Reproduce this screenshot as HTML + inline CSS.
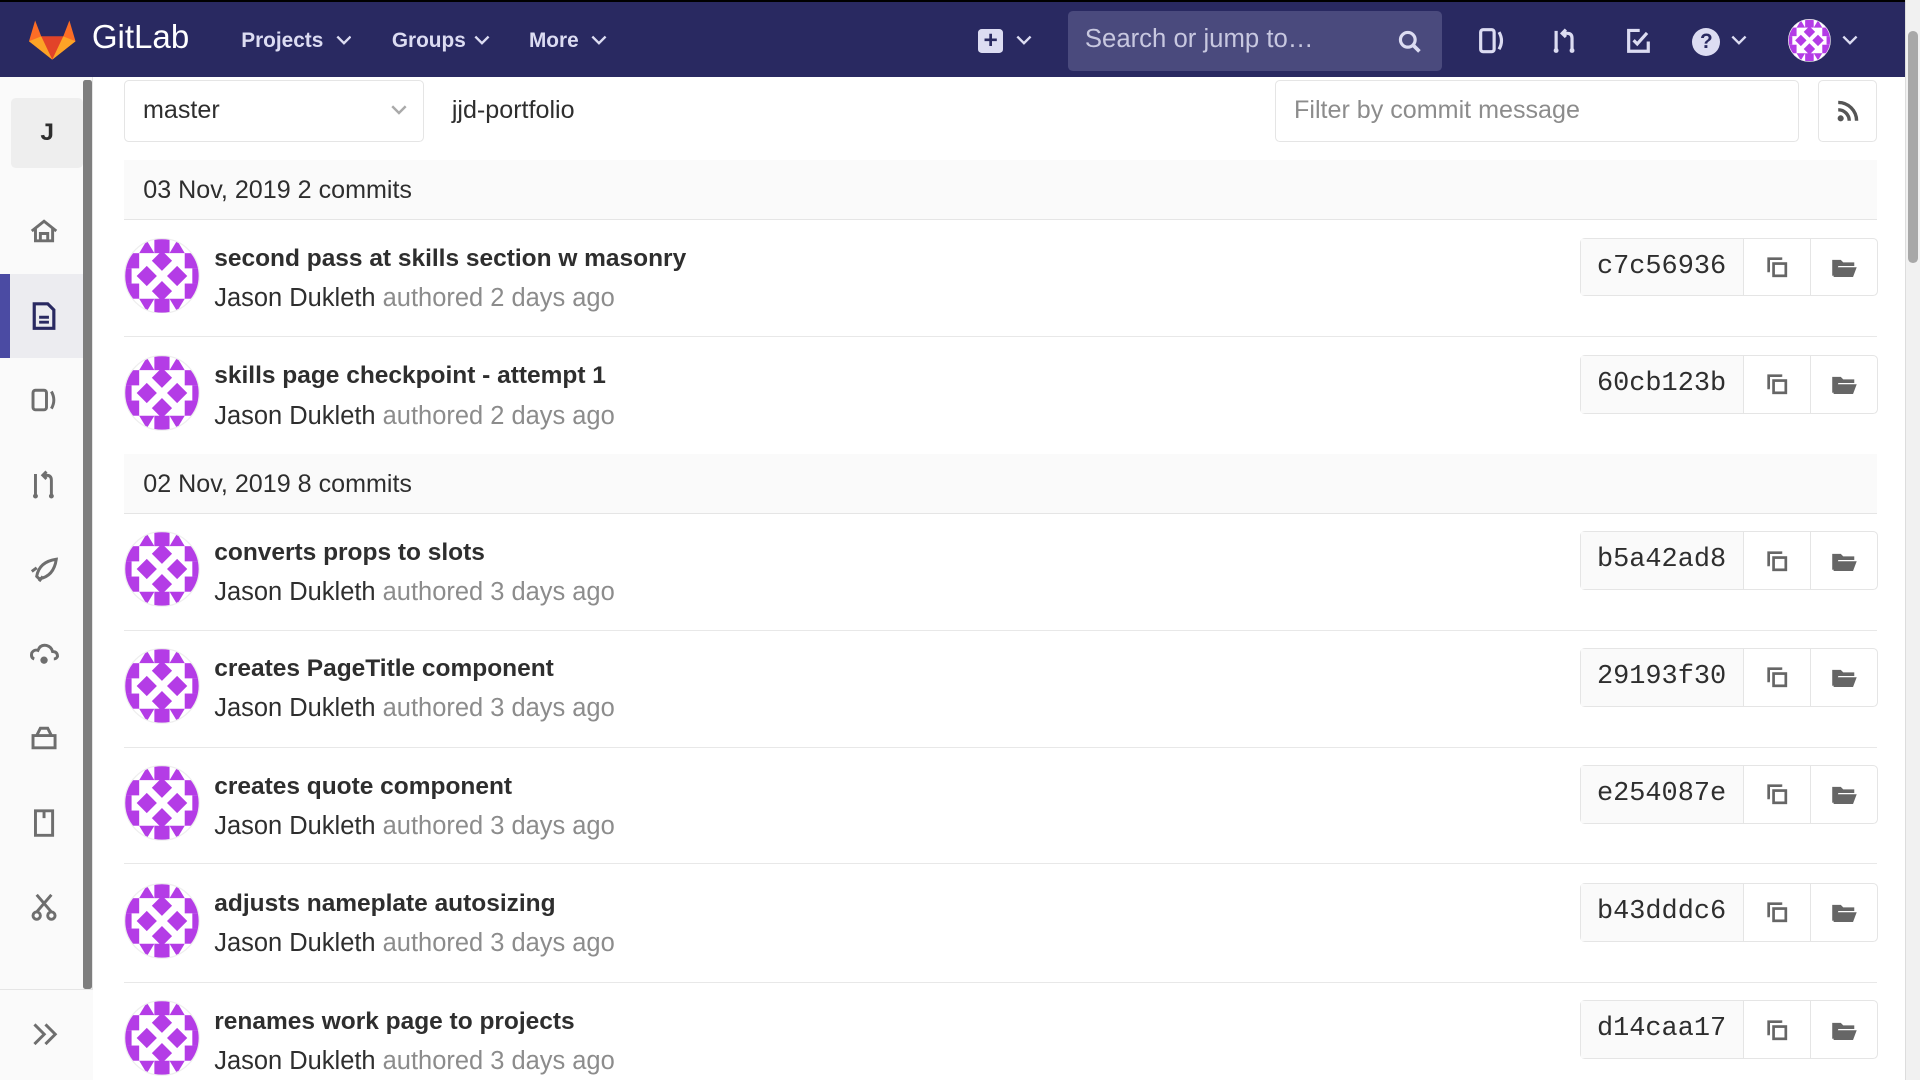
<!DOCTYPE html>
<html><head><meta charset="utf-8"><style>
*{box-sizing:border-box;margin:0;padding:0}
html,body{width:1920px;height:1080px;overflow:hidden;background:#fff}
#w{zoom:1.22449;width:1568px;height:882px;position:relative;font-family:"Liberation Sans",sans-serif;color:#2e2e2e}
.hdr{position:absolute;left:0;top:0;width:1568px;height:63px;background:#292961;border-top:2px solid #000}
.hdr .t{position:absolute;color:#fff}
.nav{position:absolute;top:22px;color:#dcdcf2;font-weight:bold;font-size:17px}
.chev{position:absolute;top:27px}
.side{position:absolute;left:0;top:63px;width:76px;height:819px;background:#fafafa;border-right:1px solid #e5e5e5}
.sb{position:absolute;left:68px;top:65px;width:7px;height:743px;background:#7e7e7e;border-radius:2px}
.si{position:absolute;left:18px;width:36px;height:36px}
.row{position:absolute;left:101px;width:1432px;border-bottom:1px solid #e8e8e8}
.day{position:absolute;left:101px;width:1432px;height:49px;background:#fafafa;border-bottom:1px solid #e5e5e5;font-size:20.5px;padding:13px 16px}
.av{position:absolute;left:0;top:14px;width:62px;height:62px}
.tt{position:absolute;left:74px;top:20px;font-weight:bold;font-size:20px;color:#2e2e2e}
.au{position:absolute;left:74px;top:52px;font-size:20.8px;color:#2e2e2e}
.au span{color:#8c8c8c}
.sha{position:absolute;left:1189px;top:14px;width:244px;height:48px;border:1px solid #e5e5e5;border-radius:4px;display:flex}
.sha .h{width:134px;background:#fafafa;border-right:1px solid #e5e5e5;font-family:"Liberation Mono",monospace;font-size:22px;line-height:46px;text-align:center;color:#2e2e2e}
.sha .b{width:55px;display:flex;align-items:center;justify-content:center}
.sha .b+.b{border-left:1px solid #e5e5e5}
</style></head><body><div id="w">
<svg width="0" height="0" style="position:absolute"><defs>
<symbol id="id" viewBox="0 0 60 60"><clipPath id="c"><circle cx="30" cy="30" r="29.5"/></clipPath>
<g clip-path="url(#c)" fill="#b43ce6"><circle cx="30" cy="30" r="30" fill="#fff"/>
<rect x="24" y="0" width="12" height="12"/><polygon points="12,12 18,2 24,12"/><polygon points="36,12 42,2 48,12"/>
<rect x="0" y="12" width="12" height="12"/><rect x="48" y="12" width="12" height="12"/><rect x="0" y="36" width="12" height="12"/><rect x="48" y="36" width="12" height="12"/>
<rect x="24" y="48" width="12" height="12"/><polygon points="12,48 18,58 24,48"/><polygon points="36,48 42,58 48,48"/>
<polygon points="30,10 38,18 30,26 22,18"/><polygon points="30,34 38,42 30,50 22,42"/><polygon points="10,30 18,22 26,30 18,38"/><polygon points="34,30 42,22 50,30 42,38"/>
<rect x="0" y="24" width="6" height="12"/><rect x="54" y="24" width="6" height="12"/></g>
<circle cx="30" cy="30" r="29.5" fill="none" stroke="#eee"/></symbol>
<symbol id="cp" viewBox="0 0 20 20"><path d="M4 13H3V3h10v1" fill="none" stroke="#666" stroke-width="2.2"/><rect x="7" y="7" width="10" height="10" fill="none" stroke="#666" stroke-width="2.2"/></symbol>
<symbol id="fo" viewBox="0 0 22 20"><path d="M1 4h7l2 2h9v3H6L3 17H1z M5 10h16l-3 8H2z" fill="#666"/></symbol>
<symbol id="ch" viewBox="0 0 12 8"><path d="M1 1l5 5 5-5" fill="none" stroke="#dcdcf2" stroke-width="1.8"/></symbol>
</defs></svg>
<div class="hdr">
<svg style="position:absolute;left:24px;top:13px" width="38" height="34" viewBox="0 0 38 34"><polygon points="19,34 0,19 5,2 10,15 28,15 33,2 38,19" fill="#fc6d26"/><polygon points="19,34 10,15 28,15" fill="#e24329"/><polygon points="0,19 10,15 19,34" fill="#fca326"/><polygon points="38,19 28,15 19,34" fill="#fca326"/></svg>
<div class="t" style="left:75px;top:14px;font-size:27px">GitLab</div>
<div class="nav" style="left:197px">Projects</div><svg class="chev" style="left:274px" width="13" height="9"><use href="#ch"/></svg>
<div class="nav" style="left:320px">Groups</div><svg class="chev" style="left:387px" width="13" height="9"><use href="#ch"/></svg>
<div class="nav" style="left:432px">More</div><svg class="chev" style="left:483px" width="13" height="9"><use href="#ch"/></svg>
<div style="position:absolute;left:799px;top:22px;width:20px;height:20px;background:#dcdcf2;border-radius:3px;color:#292961;font-weight:bold;text-align:center;line-height:20px;font-size:20px">+</div>
<svg class="chev" style="left:830px" width="13" height="9"><use href="#ch"/></svg>
<div style="position:absolute;left:872px;top:7px;width:306px;height:49px;background:#4a4a7d;border-radius:4px;color:#c8c8e0;font-size:21px;padding:12px 14px">Search or jump to…</div>
<svg style="position:absolute;left:1142px;top:23px" width="20" height="20" viewBox="0 0 20 20"><circle cx="8" cy="8" r="6" fill="none" stroke="#dcdcf2" stroke-width="2.6"/><path d="M12.5 12.5l5 5" stroke="#dcdcf2" stroke-width="3"/></svg>
<svg style="position:absolute;left:1206px;top:20px" width="24" height="24" viewBox="0 0 24 24"><rect x="3" y="3" width="11" height="18" rx="2" fill="none" stroke="#dcdcf2" stroke-width="2.6"/><path d="M18 5q4 7 0 14" fill="none" stroke="#dcdcf2" stroke-width="2.6"/></svg>
<svg style="position:absolute;left:1266px;top:20px" width="24" height="24" viewBox="0 0 24 24"><path d="M5 4v16M18 10v10M18 10q0-4-4-4h-3M13 3l-3 3 3 3" fill="none" stroke="#dcdcf2" stroke-width="2.6"/><circle cx="5" cy="20" r="2" fill="#dcdcf2"/><circle cx="18" cy="20" r="2" fill="#dcdcf2"/></svg>
<svg style="position:absolute;left:1327px;top:21px" width="22" height="22" viewBox="0 0 22 22"><path d="M12 2H3v17h16v-8" fill="none" stroke="#dcdcf2" stroke-width="2.6"/><path d="M7 10l3 3 8-9" fill="none" stroke="#dcdcf2" stroke-width="2.6"/></svg>
<div style="position:absolute;left:1382px;top:21px;width:23px;height:23px;background:#dcdcf2;border-radius:50%;color:#292961;font-weight:bold;text-align:center;font-size:17px;line-height:23px">?</div>
<svg class="chev" style="left:1414px" width="13" height="9"><use href="#ch"/></svg>
<svg style="position:absolute;left:1460px;top:14px" width="35" height="35"><use href="#id"/></svg>
<svg class="chev" style="left:1504px" width="13" height="9"><use href="#ch"/></svg>
</div>
<div class="side">
<div style="position:absolute;left:9px;top:17px;width:59px;height:57px;background:#eee;border-radius:4px;text-align:center;line-height:57px;font-weight:bold;font-size:20px">J</div>
<div style="position:absolute;left:0;top:161px;width:68px;height:68px;background:#ececf0"></div>
<div style="position:absolute;left:0;top:161px;width:8px;height:68px;background:#4b4ba3"></div>
<svg class="si" style="top:108px" viewBox="0 0 36 36"><path d="M8 18 18 10 28 18 M11 16v10h14V16 M15 26v-6h6v6" fill="none" stroke="#6e6e6e" stroke-width="2.4"/></svg>
<svg class="si" style="top:177px" viewBox="0 0 36 36"><path d="M10 8h11l5 5v15H10z" fill="none" stroke="#292961" stroke-width="2.6"/><path d="M14 19h8M14 23h8" stroke="#292961" stroke-width="2.4"/></svg>
<svg class="si" style="top:246px" viewBox="0 0 36 36"><rect x="9" y="10" width="11" height="16" rx="2" fill="none" stroke="#6e6e6e" stroke-width="2.4"/><path d="M24 11q4 7 0 14" fill="none" stroke="#6e6e6e" stroke-width="2.4"/></svg>
<svg class="si" style="top:315px" viewBox="0 0 36 36"><path d="M11 9v18M24 14v13M24 14q0-4-4-4h-2M20 7l-3 3 3 3" fill="none" stroke="#6e6e6e" stroke-width="2.4"/><circle cx="11" cy="27" r="2" fill="#6e6e6e"/><circle cx="24" cy="27" r="2" fill="#6e6e6e"/></svg>
<svg class="si" style="top:384px" viewBox="0 0 36 36"><path d="M12 24q2-12 16-14-2 14-14 16zM8 20l4-3M14 28l3-4" fill="none" stroke="#6e6e6e" stroke-width="2.4"/></svg>
<svg class="si" style="top:453px" viewBox="0 0 36 36"><path d="M10 22q-3-1-2-5 2-3 5-2 2-5 7-4 4 1 5 5 4 0 4 4-1 2-3 2" fill="none" stroke="#6e6e6e" stroke-width="2.4"/><circle cx="18" cy="23" r="3" fill="#6e6e6e"/></svg>
<svg class="si" style="top:522px" viewBox="0 0 36 36"><path d="M9 16h18v10H9zM12 16l3-6h6l3 6" fill="none" stroke="#6e6e6e" stroke-width="2.4"/></svg>
<svg class="si" style="top:591px" viewBox="0 0 36 36"><path d="M11 8h14v20H11zM18 8v6" fill="none" stroke="#6e6e6e" stroke-width="2.4"/></svg>
<svg class="si" style="top:660px" viewBox="0 0 36 36"><path d="M12 8l12 14M24 8 12 22" stroke="#6e6e6e" stroke-width="2.4"/><circle cx="12" cy="25" r="3" fill="none" stroke="#6e6e6e" stroke-width="2.4"/><circle cx="24" cy="25" r="3" fill="none" stroke="#6e6e6e" stroke-width="2.4"/></svg>
<div style="position:absolute;left:0;top:745px;width:76px;height:74px;background:#fafafa;border-top:1px solid #e5e5e5"></div>
<svg style="position:absolute;left:26px;top:772px" width="22" height="20" viewBox="0 0 22 20"><path d="M2 2l8 8-8 8M11 2l8 8-8 8" fill="none" stroke="#6e6e6e" stroke-width="2.4"/></svg>
</div>
<div class="sb"></div>
<div style="position:absolute;left:101px;top:65px;width:245px;height:51px;border:1px solid #e5e5e5;border-radius:4px;font-size:20.5px;padding:13px 15px">master<svg style="position:absolute;right:13px;top:20px" width="13" height="9"><path d="M1 1l5.5 5.5L12 1" fill="none" stroke="#aaa" stroke-width="2"/></svg></div>
<div style="position:absolute;left:369px;top:78px;font-size:20.5px">jjd-portfolio</div>
<div style="position:absolute;left:1041px;top:65px;width:428px;height:51px;border:1px solid #e5e5e5;border-radius:4px;font-size:20.5px;padding:13px 15px;color:#8c8c8c">Filter by commit message</div>
<div style="position:absolute;left:1485px;top:65px;width:48px;height:51px;border:1px solid #e5e5e5;border-radius:4px"><svg style="position:absolute;left:14px;top:16px" width="18" height="18" viewBox="0 0 18 18"><circle cx="3" cy="15" r="2.5" fill="#555"/><path d="M1 8a9 9 0 0 1 9 9M1 2a15 15 0 0 1 15 15" fill="none" stroke="#555" stroke-width="2.8"/></svg></div>
<div class="day" style="top:131px">03 Nov, 2019 2 commits</div>
<div class="day" style="top:371px">02 Nov, 2019 8 commits</div>

<div class="row" style="top:180px;height:95px"><svg class="av"><use href="#id"/></svg><div class="tt">second pass at skills section w masonry</div><div class="au">Jason Dukleth <span>authored 2 days ago</span></div><div class="sha"><div class="h">c7c56936</div><div class="b"><svg width="20" height="20"><use href="#cp"/></svg></div><div class="b"><svg width="22" height="20"><use href="#fo"/></svg></div></div></div>
<div class="row" style="top:276px;height:95px;border:none"><svg class="av"><use href="#id"/></svg><div class="tt">skills page checkpoint - attempt 1</div><div class="au">Jason Dukleth <span>authored 2 days ago</span></div><div class="sha"><div class="h">60cb123b</div><div class="b"><svg width="20" height="20"><use href="#cp"/></svg></div><div class="b"><svg width="22" height="20"><use href="#fo"/></svg></div></div></div>
<div class="row" style="top:420px;height:95px"><svg class="av"><use href="#id"/></svg><div class="tt">converts props to slots</div><div class="au">Jason Dukleth <span>authored 3 days ago</span></div><div class="sha"><div class="h">b5a42ad8</div><div class="b"><svg width="20" height="20"><use href="#cp"/></svg></div><div class="b"><svg width="22" height="20"><use href="#fo"/></svg></div></div></div>
<div class="row" style="top:515px;height:96px"><svg class="av"><use href="#id"/></svg><div class="tt">creates PageTitle component</div><div class="au">Jason Dukleth <span>authored 3 days ago</span></div><div class="sha"><div class="h">29193f30</div><div class="b"><svg width="20" height="20"><use href="#cp"/></svg></div><div class="b"><svg width="22" height="20"><use href="#fo"/></svg></div></div></div>
<div class="row" style="top:611px;height:95px"><svg class="av"><use href="#id"/></svg><div class="tt">creates quote component</div><div class="au">Jason Dukleth <span>authored 3 days ago</span></div><div class="sha"><div class="h">e254087e</div><div class="b"><svg width="20" height="20"><use href="#cp"/></svg></div><div class="b"><svg width="22" height="20"><use href="#fo"/></svg></div></div></div>
<div class="row" style="top:707px;height:96px"><svg class="av"><use href="#id"/></svg><div class="tt">adjusts nameplate autosizing</div><div class="au">Jason Dukleth <span>authored 3 days ago</span></div><div class="sha"><div class="h">b43dddc6</div><div class="b"><svg width="20" height="20"><use href="#cp"/></svg></div><div class="b"><svg width="22" height="20"><use href="#fo"/></svg></div></div></div>
<div class="row" style="top:803px;height:96px;border:none"><svg class="av"><use href="#id"/></svg><div class="tt">renames work page to projects</div><div class="au">Jason Dukleth <span>authored 3 days ago</span></div><div class="sha"><div class="h">d14caa17</div><div class="b"><svg width="20" height="20"><use href="#cp"/></svg></div><div class="b"><svg width="22" height="20"><use href="#fo"/></svg></div></div></div>

<div style="position:absolute;left:1556px;top:0;width:12px;height:882px;background:#f1f1f1;border-left:1px solid #ddd"></div>
<div style="position:absolute;left:1558px;top:25px;width:8px;height:190px;background:#a8a8a8;border-radius:4px"></div>
</div></body></html>
